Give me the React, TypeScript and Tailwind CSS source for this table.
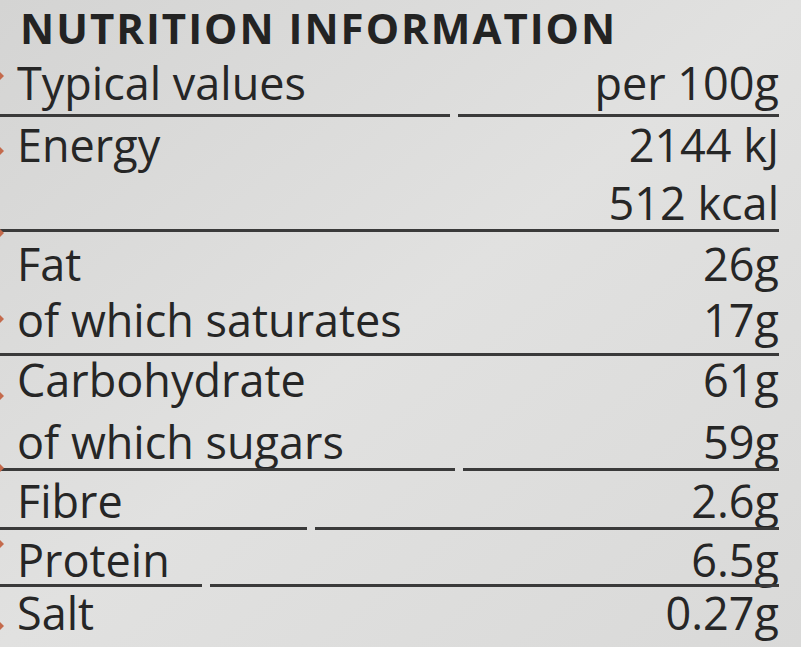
import React from "react";

type Item =
  | { kind: "row"; label: string; value: string; mt: string }
  | { kind: "rule"; mt: string; gap?: string };

// label printed on a slightly skewed pack, so spacing is per line
const items: Item[] = [
  { kind: "row", label: "Typical values", value: "per 100g", mt: "mt-[3px]" },
  { kind: "rule", mt: "mt-[7px]", gap: "w-[450px]" },
  { kind: "row", label: "Energy", value: "2144 kJ", mt: "mt-[4px]" },
  { kind: "row", label: "", value: "512 kcal", mt: "mt-[10px]" },
  { kind: "rule", mt: "mt-[2px]" },
  { kind: "row", label: "Fat", value: "26g", mt: "mt-[8px]" },
  { kind: "row", label: "of which saturates", value: "17g", mt: "mt-[8px]" },
  { kind: "rule", mt: "mt-[9px]" },
  { kind: "row", label: "Carbohydrate", value: "61g", mt: "mt-0" },
  { kind: "row", label: "of which sugars", value: "59g", mt: "mt-[14px]" },
  { kind: "rule", mt: "mt-[2px]", gap: "w-[455px]" },
  { kind: "row", label: "Fibre", value: "2.6g", mt: "mt-[6px]" },
  { kind: "rule", mt: "mt-[2px]", gap: "w-[307px]" },
  { kind: "row", label: "Protein", value: "6.5g", mt: "mt-[6px]" },
  { kind: "rule", mt: "mt-0", gap: "w-[202px]" },
  { kind: "row", label: "Salt", value: "0.27g", mt: "mt-[2px]" },
];

const markers = [
  "top-[72px]",
  "top-[147px]",
  "top-[229px]",
  "top-[315px]",
  "top-[392px]",
  "top-[464px]",
  "top-[540px]",
  "top-[622px]",
];

function Rule({ mt, gap }: { mt: string; gap?: string }) {
  if (!gap) {
    return <div className={`${mt} h-[3px] w-[779px] bg-[#3a3a3a]`} />;
  }
  return (
    <div className={`${mt} flex h-[3px] w-[779px] gap-[8px]`}>
      <div className={`${gap} bg-[#3a3a3a]`} />
      <div className="flex-1 bg-[#3a3a3a]" />
    </div>
  );
}

function Row({ label, value, mt }: { label: string; value: string; mt: string }) {
  return (
    <div
      className={`${mt} flex h-[48px] items-start justify-between pl-[17px] pr-[22px] text-[45px] leading-[48px] font-medium whitespace-nowrap`}
    >
      <span>{label}</span>
      <span>{value}</span>
    </div>
  );
}

export default function App() {
  return (
    <div className="relative h-[650px] w-[801px] overflow-hidden border-b-[3px] border-white bg-linear-to-br from-[#d4d4d3] via-[#e1e1e0] to-[#d9d9d8] font-['Open_Sans',sans-serif] text-[#262626]">
      {/* orange alignment ticks on the left edge of the print */}
      {markers.map((top) => (
        <span
          key={top}
          className={`absolute left-0 ${top} h-0 w-0 border-y-[4px] border-l-[4px] border-y-transparent border-l-[#c46a4c]`}
        />
      ))}

      <h1 className="h-[56px] pl-[20px] text-[42px] leading-[56px] font-bold tracking-[2px] text-[#232323]">
        NUTRITION INFORMATION
      </h1>

      {items.map((item, i) =>
        item.kind === "row" ? (
          <Row key={i} label={item.label} value={item.value} mt={item.mt} />
        ) : (
          <Rule key={i} mt={item.mt} gap={item.gap} />
        )
      )}
    </div>
  );
}
